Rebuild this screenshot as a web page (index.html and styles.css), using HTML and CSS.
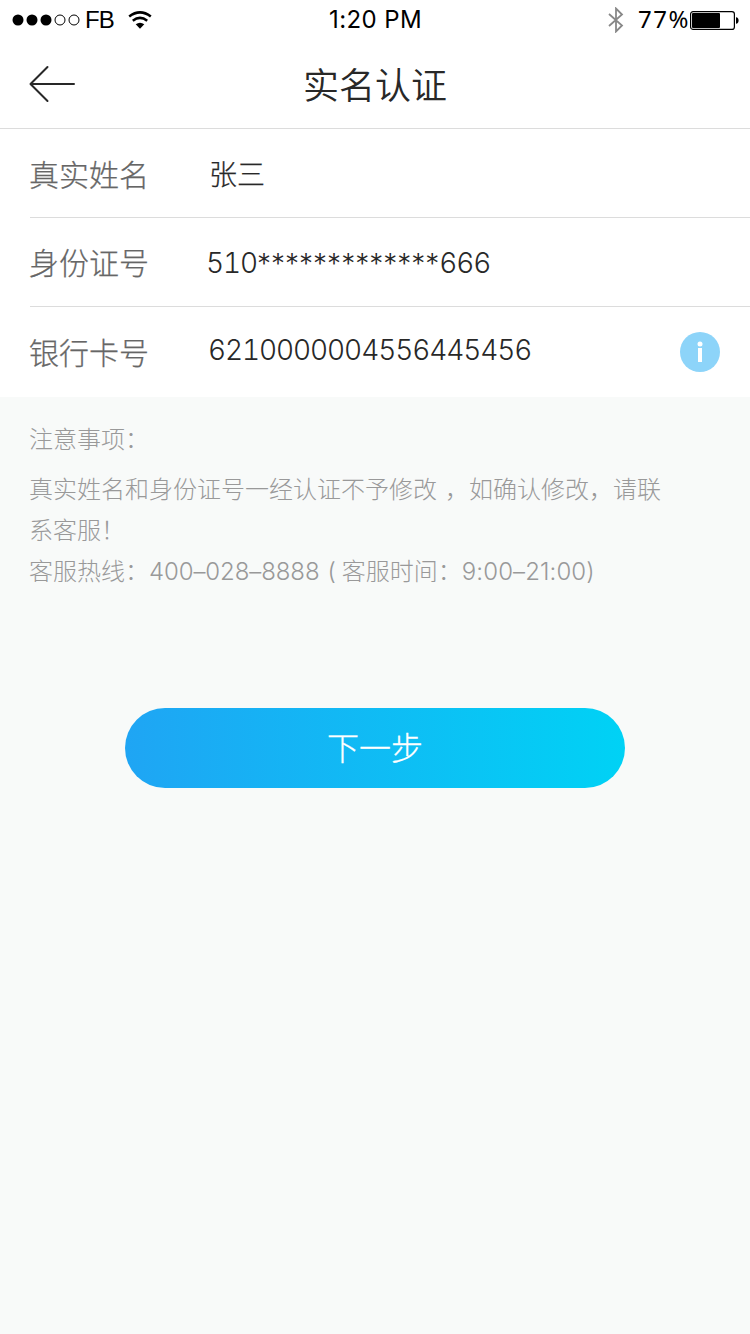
FILE: index.html
```html
<!DOCTYPE html>
<html lang="zh-CN">
<head>
    <meta charset="UTF-8">
    <title>实名认证</title>
    <link rel="stylesheet" href="styles.css">
</head>
<body>
    <div class="status-bar">
        <div class="status-left">
            <svg class="signal" width="68" height="12" viewBox="0 0 68 12">
                <circle cx="6" cy="6" r="5.5"/>
                <circle cx="20" cy="6" r="5.5"/>
                <circle cx="34" cy="6" r="5.5"/>
                <circle class="empty" cx="48" cy="6" r="5"/>
                <circle class="empty" cx="62" cy="6" r="5"/>
            </svg>
            <span class="carrier">FB</span>
            <svg class="wifi" width="24" height="18" viewBox="0 0 24 18">
                <path class="arc" d="M1.2 5.5Q12 -2.6 22.8 5.5"/>
                <path class="arc" d="M4.8 9.7Q12 4.2 19.2 9.7"/>
                <path d="M7.7 13.2Q12 10.2 16.3 13.2L12 17.8Z"/>
            </svg>
        </div>
        <span class="time">1:20 PM</span>
        <div class="status-right">
            <svg class="bluetooth" width="16" height="26" viewBox="0 0 16 26">
                <path d="M1 7L14 18.5L8 24.5V1.5L14 7.5L1 19"/>
            </svg>
            <span class="percent">77%</span>
            <svg class="battery" width="49" height="19" viewBox="0 0 49 19">
                <rect class="case" x="0.6" y="0.6" width="43.8" height="17.8" rx="2.5"/>
                <rect x="2" y="2" width="28" height="15" rx="1"/>
                <path d="M46 6.2Q48.6 6.5 48.6 9.5T46 12.8Z"/>
            </svg>
        </div>
    </div>

    <div class="nav">
        <a class="back" href="#">
            <svg width="46" height="38" viewBox="0 0 46 38">
                <path d="M18.5 2L1.5 19L18.5 36M1.5 19H45"/>
            </svg>
        </a>
        <h1>实名认证</h1>
    </div>

    <div class="form">
        <div class="form-row">
            <span class="label">真实姓名</span>
            <span class="value name">张三</span>
        </div>
        <div class="form-row">
            <span class="label">身份证号</span>
            <span class="value id-number">510<span class="mask">*************</span>666</span>
        </div>
        <div class="form-row">
            <span class="label">银行卡号</span>
            <span class="value card-number">6210000004556445456</span>
            <svg class="info" width="40" height="40" viewBox="0 0 40 40">
                <circle class="info-bg" cx="20" cy="20" r="20"/>
                <circle cx="20" cy="12" r="2.5"/>
                <rect x="18" y="16" width="4" height="14"/>
            </svg>
        </div>
    </div>

    <div class="notes">
        <h2>注意事项：</h2>
        <p>真实姓名和身份证号一经认证不予修改<span class="gap"></span>，如确认修改，请联<br>系客服！</p>
        <p>客服热线：<span class="phone">400–028–8888</span><span class="paren">(</span>客服时间：<span class="hours">9:00–21:00)</span></p>
    </div>

    <button class="next">下一步</button>
</body>
</html>
```
FILE: styles.css
```css
body {
    margin: 0;
    min-height: 1334px;
    background-color: #f8faf9;
    color: #282828;
    font-family: Inter, "Noto Sans CJK SC", sans-serif;
}
.status-bar {
    display: grid;
    grid-template-columns: 1fr auto 1fr;
    align-items: center;
    height: 40px;
    padding: 0 11px 0 12px;
    background-color: #fff;
    color: #000;
    font-size: 24px;
    line-height: 40px;
}
.status-left, .status-right {
    display: flex;
    align-items: center;
}
.status-right {
    justify-content: flex-end;
}
.signal .empty {
    fill: none;
    stroke: #000;
}
.carrier {
    width: 30px;
    margin-left: 5px;
    font-family: "Liberation Sans", Arial, sans-serif;
    letter-spacing: -1px;
}
.wifi {
    margin-left: 13px;
}
.wifi .arc {
    fill: none;
    stroke: #000;
    stroke-width: 2.6;
}
.time {
    font-size: 24px;
    letter-spacing: 0.4px;
}
.bluetooth {
    margin-right: 14px;
    fill: none;
    stroke: #888;
    stroke-width: 1.8;
}
.percent {
    padding-bottom: 2px;
    font-family: "Noto Sans", sans-serif;
    line-height: 38px;
    letter-spacing: 1.5px;
}
.battery .case {
    fill: none;
    stroke: #000;
    stroke-width: 1.2;
}
.nav {
    display: grid;
    grid-template-columns: 1fr auto 1fr;
    align-items: center;
    height: 88px;
    padding: 0 29px;
    background-color: #fff;
    border-bottom: 1px solid #dcdcdc;
}
.back {
    display: flex;
}
.back path {
    fill: none;
    stroke: #282828;
    stroke-width: 2;
    stroke-linecap: round;
    stroke-linejoin: round;
}
h1 {
    margin: 0;
    padding-top: 4px;
    font-size: 36px;
    font-weight: 350;
    line-height: 84px;
}
.form {
    padding-left: 30px;
    background-color: #fff;
}
.form-row {
    display: flex;
    align-items: center;
    height: 88px;
    padding-right: 30px;
    border-bottom: 1px solid #dcdcdc;
}
.form-row:last-child {
    height: 90px;
    border-bottom: none;
}
.label {
    width: 181px;
    margin-left: -1px;
    padding-bottom: 2px;
    color: #666;
    font-size: 30px;
    font-weight: 300;
    -webkit-text-stroke: 0.25px #666;
}
.form-row:first-child .label {
    padding-bottom: 0;
}
.value {
    font-size: 28px;
    font-weight: 300;
    font-variant-numeric: tabular-nums;
}
.name {
    margin-left: -1px;
    -webkit-text-stroke: 0.25px #282828;
}
.id-number {
    margin-left: -4px;
    padding-top: 2px;
    line-height: 40px;
    letter-spacing: -1.1px;
}
.mask {
    line-height: 1;
    letter-spacing: 0;
    vertical-align: -1px;
    font-variant-numeric: normal;
}
.card-number {
    margin-left: -2px;
    padding-bottom: 5px;
    letter-spacing: -1.1px;
}
.info {
    margin-left: auto;
    fill: #fff;
}
.info-bg {
    fill: #8dd4f9;
}
.notes {
    padding: 22px 30px 0 29px;
    color: #999;
    font-size: 24px;
    font-weight: 300;
    line-height: 41px;
}
.notes h2 {
    margin: 0 0 9px;
    font-size: 24px;
    font-weight: 300;
}
.notes p {
    margin: 0;
    white-space: nowrap;
}
.phone {
    letter-spacing: -0.1px;
}
.gap {
    display: inline-block;
    width: 8px;
}
.paren {
    margin: 0 6px 0 8px;
}
.hours {
    letter-spacing: 0.1px;
}
.next {
    display: block;
    width: 500px;
    height: 80px;
    margin: 116px auto 0;
    padding: 0 0 4px;
    border: none;
    border-radius: 40px;
    background: linear-gradient(to right, #1fa5f4, #00d2f5);
    color: #fff;
    font-family: "Noto Sans CJK SC", sans-serif;
    font-size: 32px;
    font-weight: 300;
    line-height: 76px;
    -webkit-text-stroke: 0.3px #fff;
}
```
